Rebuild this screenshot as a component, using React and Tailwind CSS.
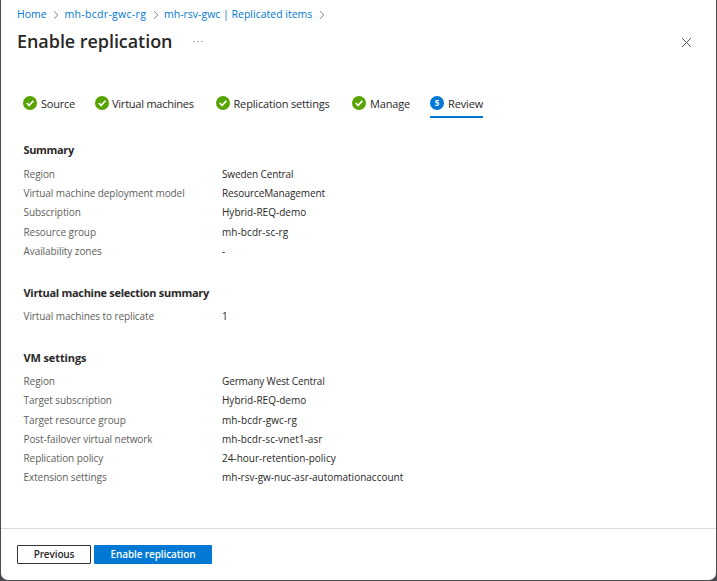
import React from "react";

const BREADCRUMBS = [
  { label: "Home", box: "w-[30px]" },
  { label: "mh-bcdr-gwc-rg", box: "w-[82px] tracking-[0.31px]" },
  { label: "mh-rsv-gwc | Replicated items", box: "w-[149px]" },
];

const STEPS = [
  { label: "Source", box: "w-[72px]", gap: "gap-1", text: "tracking-[-0.25px]" },
  { label: "Virtual machines", box: "w-[121px]", gap: "gap-[3px]", text: "tracking-[-0.23px]" },
  { label: "Replication settings", box: "w-[136px]", gap: "gap-[3.5px]", text: "tracking-[-0.17px]" },
  { label: "Manage", box: "w-[78px]", gap: "gap-1", text: "tracking-[-0.15px]" },
];

const SECTIONS = [
  {
    title: "Summary",
    height: "h-[143px]",
    titleStyle: "tracking-[-0.35px]",
    listStyle: "pt-[5px]",
    rows: [
      ["Region", "Sweden Central"],
      ["Virtual machine deployment model", "ResourceManagement"],
      ["Subscription", "Hybrid-REQ-demo"],
      ["Resource group", "mh-bcdr-sc-rg", "tracking-[0.08px]"],
      ["Availability zones", "-"],
    ],
  },
  {
    title: "Virtual machine selection summary",
    height: "h-[65px]",
    titleStyle: "tracking-[-0.3px]",
    listStyle: "pt-1",
    rows: [["Virtual machines to replicate", "1"]],
  },
  {
    title: "VM settings",
    height: "h-[150px]",
    titleStyle: "tracking-[-0.12px]",
    listStyle: "pt-[4.1px]",
    rows: [
      ["Region", "Germany West Central"],
      ["Target subscription", "Hybrid-REQ-demo"],
      ["Target resource group", "mh-bcdr-gwc-rg", "tracking-[0.1px]"],
      ["Post-failover virtual network", "mh-bcdr-sc-vnet1-asr", "tracking-[0.05px]"],
      ["Replication policy", "24-hour-retention-policy"],
      ["Extension settings", "mh-rsv-gw-nuc-asr-automationaccount"],
    ],
  },
];

function Chevron() {
  return (
    <svg className="h-2 w-[17.5px] shrink-0" viewBox="0 0 17.5 8" fill="none" stroke="#777" strokeWidth="0.9">
      <path d="M7 .3 10.9 4 7 7.7" />
    </svg>
  );
}

function CheckBadge() {
  return (
    <svg className="size-[14px] shrink-0" viewBox="0 0 14 14">
      <circle cx="7" cy="7" r="7" fill="#57a300" />
      <path d="M3.7 7 6.1 9.4 10.4 4.7" fill="none" stroke="#fff" strokeWidth="1.7" />
    </svg>
  );
}

export default function App() {
  return (
    <div className="h-[581px] w-[717px] overflow-hidden bg-[#4c4b50] px-px pb-px font-['Open_Sans','Noto_Sans',sans-serif] whitespace-nowrap text-[#292827]">
      <div className="flex h-[580px] flex-col rounded-b-[7px] bg-white">
        <nav className="flex h-[29px] items-center pl-4 text-[10.5px] text-[#0078d4]">
          {BREADCRUMBS.map((b) => (
            <React.Fragment key={b.label}>
              <span className={b.box}>{b.label}</span>
              <Chevron />
            </React.Fragment>
          ))}
        </nav>
        <header className="flex h-[26px] items-center pl-4">
          <h1 className="w-[176px] pb-0.5 text-[18px] leading-6 font-semibold tracking-[-0.06px]">Enable replication</h1>
          <svg className="h-1 w-[10px]" viewBox="0 0 10 4" fill="#666">
            <rect x="0.5" y="1" width="1" height="1" />
            <rect x="4.5" y="1" width="1" height="1" />
            <rect x="8.5" y="1" width="1" height="1" />
          </svg>
          <svg className="mr-[24px] ml-auto size-[11px]" viewBox="0 0 11 11" stroke="#444" strokeWidth="0.9">
            <path d="M1 1 10 10M10 1 1 10" />
          </svg>
        </header>

        <div className="mt-[37px] flex h-[26px] pl-[22px] text-[11px]">
          {STEPS.map((s) => (
            <div key={s.label} className={`flex h-[22px] items-center ${s.box} ${s.gap}`}>
              <CheckBadge />
              <span className={`pt-0.5 ${s.text}`}>{s.label}</span>
            </div>
          ))}
          <div className="flex h-[26px] w-[53px] items-center gap-1 border-b-2 border-[#0078d4] pb-0.5 tracking-[-0.15px]">
            <span className="flex size-[14px] shrink-0 items-center justify-center rounded-full bg-[#0078d4] text-[8px] font-bold text-white">
              5
            </span>
            <span className="pt-0.5">Review</span>
          </div>
        </div>

        <main className="flex flex-col pt-[22px] pl-[22.5px]">
          {SECTIONS.map((s) => (
            <section key={s.title} className={s.height}>
              <h2 className={`flex h-5 items-center text-[11px] font-bold ${s.titleStyle}`}>{s.title}</h2>
              <dl className={`text-[10px] ${s.listStyle}`}>
                {s.rows.map(([k, v, spacing]) => (
                  <div key={k} className="flex h-[19.2px] items-center">
                    <dt className="w-[198.5px] tracking-[-0.08px] text-[#605e5c]">{k}</dt>
                    <dd className={v.includes("-") ? spacing : "tracking-[-0.12px]"}>{v}</dd>
                  </div>
                ))}
              </dl>
            </section>
          ))}
        </main>

        <footer className="mt-auto flex h-[52px] gap-[3px] border-t border-[#dadada] pt-4 pl-4 text-[10px] font-semibold tracking-[-0.12px]">
          <button className="h-[19px] w-[74px] rounded-[1px] border border-[#333] bg-white">Previous</button>
          <button className="h-[19px] w-[118px] rounded-[1px] bg-[#0078d4] text-white">Enable replication</button>
        </footer>
      </div>
    </div>
  );
}
